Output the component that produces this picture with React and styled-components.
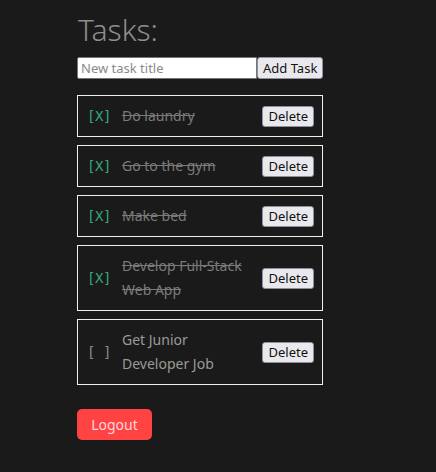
import React, { useState } from "react";
import styled, { createGlobalStyle } from "styled-components";

const Global = createGlobalStyle`
  html, body { margin: 0; padding: 0; background: #1a1a1a; }
  body { font-family: "Noto Sans", "Open Sans", sans-serif; }
`;

const Page = styled.div`
  min-height: 472px;
  padding: 12px 0 0 77px;
  box-sizing: border-box;
`;

const Container = styled.div`
  width: 246px;
`;

const Title = styled.h1`
  margin: 0 0 9px 1px;
  font-size: 30px;
  font-weight: 300;
  line-height: 36px;
  color: #8e8e8e;
`;

const Form = styled.form`
  display: flex;
  margin-bottom: 16px;
`;

const Input = styled.input`
  width: 180px;
  height: 22px;
  box-sizing: border-box;
  border: 1px solid #767676;
  border-radius: 2px 0 0 2px;
  padding: 1px 3px;
  font-family: "Noto Sans", sans-serif;
  font-size: 13px;
  color: #222;
  background: #fff;
  outline: none;
  &::placeholder { color: #8a8a8a; }
`;

const SmallButton = styled.button`
  height: ${(p) => p.$h || 22}px;
  box-sizing: border-box;
  padding: 0 5px;
  border: 1px solid #8f8f9d;
  border-radius: 3px;
  background: #e9e9ed;
  color: #111;
  font-family: "Noto Sans", sans-serif;
  font-size: 13px;
  line-height: 1;
  flex-shrink: 0;
  cursor: pointer;
`;

const List = styled.div`
  display: flex;
  flex-direction: column;
  gap: 8px;
`;

const Card = styled.div`
  display: flex;
  align-items: center;
  gap: 10px;
  border: 1px solid #f0f0f0;
  padding: 8px 8px 8px 9px;
`;

const Check = styled.span`
  font-family: "DejaVu Sans Mono", "Liberation Mono", monospace;
  font-size: 14px;
  letter-spacing: -0.4px;
  color: ${(p) => (p.$done ? "#35a77a" : "#8a8a8a")};
  white-space: pre;
  flex-shrink: 0;
  width: 25px;
`;

const Label = styled.span`
  flex: 1;
  font-size: 14px;
  line-height: 24px;
  color: ${(p) => (p.$done ? "#7a7a7a" : "#9a9a9a")};
  text-decoration: ${(p) => (p.$done ? "line-through" : "none")};
`;

const Logout = styled.button`
  margin-top: 24px;
  width: 75px;
  height: 31px;
  border: none;
  border-radius: 5px;
  background: #ff4343;
  color: #ffd6dc;
  font-family: "Noto Sans", sans-serif;
  font-size: 14px;
  cursor: pointer;
`;

const initial = [
  { title: "Do laundry", done: true },
  { title: "Go to the gym", done: true },
  { title: "Make bed", done: true },
  { title: "Develop Full-Stack Web App", done: true },
  { title: "Get Junior Developer Job", done: false },
];

export default function App() {
  const [tasks] = useState(initial);
  return (
    <Page>
      <Global />
      <Container>
        <Title>Tasks:</Title>
        <Form onSubmit={(e) => e.preventDefault()}>
          <Input placeholder="New task title" />
          <SmallButton type="submit" $h={22}>Add Task</SmallButton>
        </Form>
        <List>
          {tasks.map((t) => (
            <Card key={t.title}>
              <Check $done={t.done}>{t.done ? "[X]" : "[ ]"}</Check>
              <Label $done={t.done}>{t.title}</Label>
              <SmallButton $h={21}>Delete</SmallButton>
            </Card>
          ))}
        </List>
        <Logout>Logout</Logout>
      </Container>
    </Page>
  );
}
